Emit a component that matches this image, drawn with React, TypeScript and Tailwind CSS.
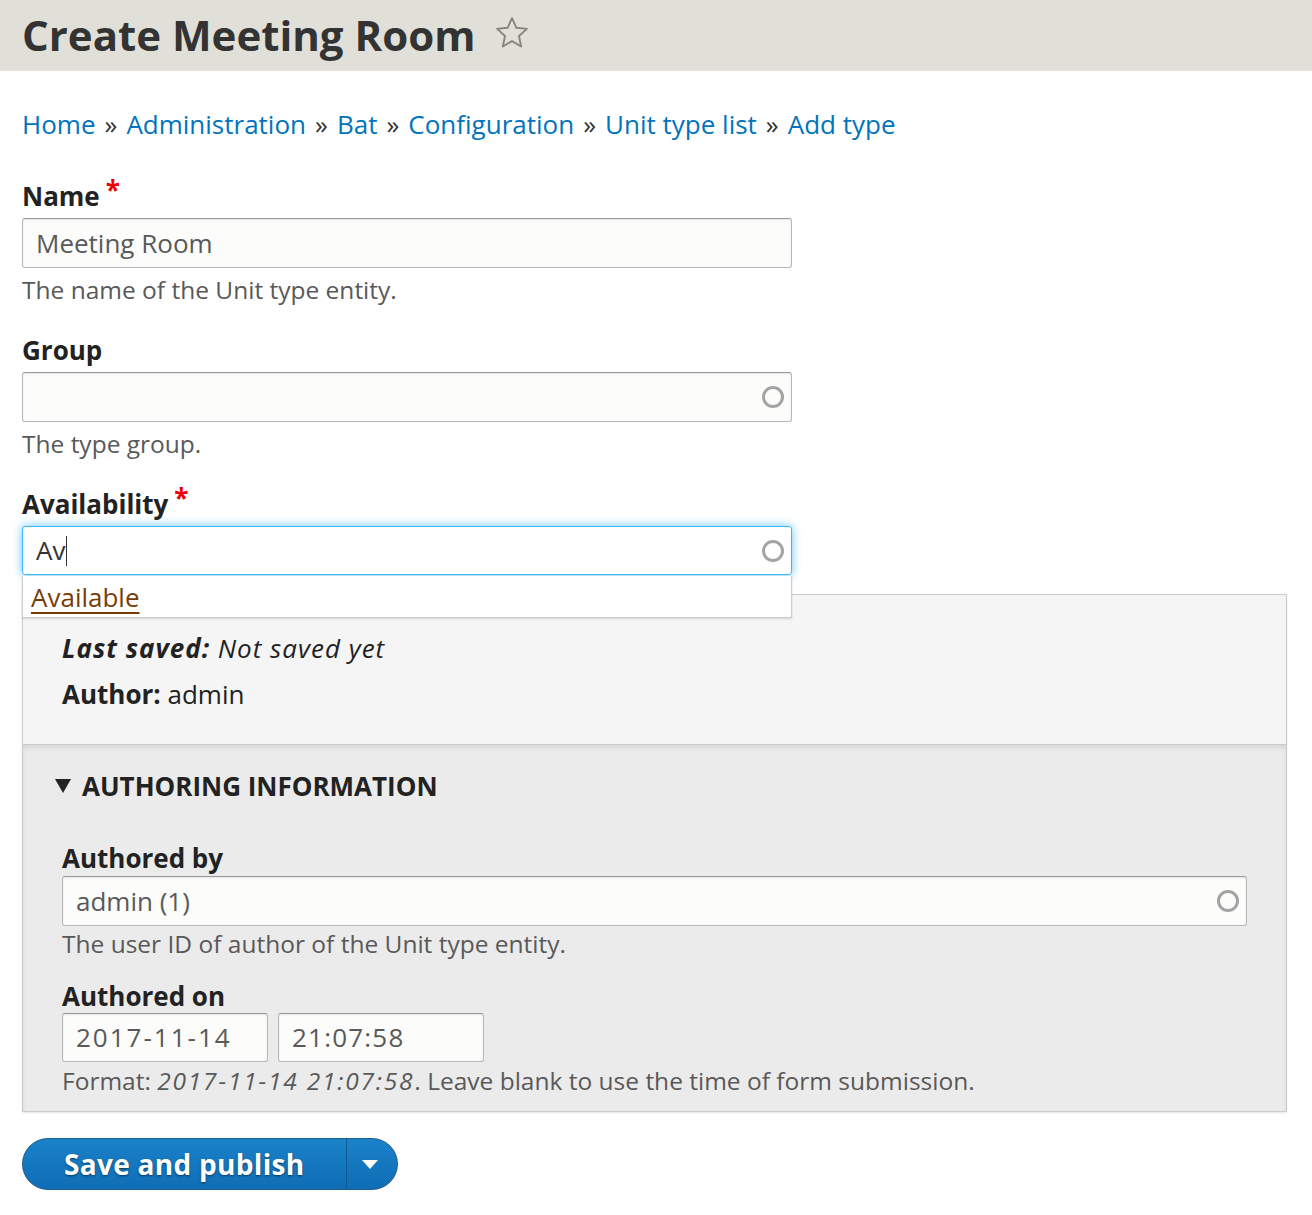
import React from 'react'

const font = { fontFamily: '"Open Sans", "Noto Sans", "DejaVu Sans", sans-serif' }

function Throbber() {
  return (
    <svg width="24" height="24" viewBox="0 0 24 24" className="shrink-0">
      <circle cx="12" cy="12" r="9.5" fill="none" stroke="#a3a3a3" strokeWidth="3" />
    </svg>
  )
}

function Label({ children, required, className = 'mb-[6px]' }: { children: React.ReactNode; required?: boolean; className?: string }) {
  return (
    <div className={`font-bold text-[26px] leading-[32px] text-[#222] ${className}`}>
      {children}
      {required && <span className="text-[#e00] ml-[6px] relative -top-[6px]">*</span>}
    </div>
  )
}

function Field({ value, throbber, className = '' }: { value: string; throbber?: boolean; className?: string }) {
  return (
    <div
      className={`h-[50px] flex items-center justify-between pl-[13px] ${throbber ? 'pr-[6px]' : 'pr-[13px]'} bg-[#fcfcfa] border border-[#b8b8b8] border-t-[#999] rounded-[3px] shadow-[inset_0_1px_2px_rgba(0,0,0,0.1)] text-[26px] text-[#595959] ${className}`}
    >
      <span>{value}</span>
      {throbber && <Throbber />}
    </div>
  )
}

function Desc({ children, className = 'mt-[7px]' }: { children: React.ReactNode; className?: string }) {
  return <div className={`text-[24.5px] leading-[30px] text-[#595959] ${className}`}>{children}</div>
}

export default function App() {
  const crumbs = ['Home', 'Administration', 'Bat', 'Configuration', 'Unit type list', 'Add type']
  return (
    <div style={font} className="w-[1312px] min-h-[1215px] bg-white text-[#333]">
      {/* Page title */}
      <div className="h-[71px] bg-[#e0e0d8] flex items-center px-[22px] gap-[18px]">
        <h1 className="text-[42px] font-bold text-[#333] leading-none -mt-[2px]">Create Meeting Room</h1>
        <svg width="38" height="38" viewBox="0 0 24 24" className="-mt-[6px]">
          <path
            d="M12 2.6l2.8 6.1 6.6.7-5 4.5 1.4 6.6L12 17.1l-5.8 3.4 1.4-6.6-5-4.5 6.6-.7z"
            fill="none"
            stroke="#868679"
            strokeWidth="1.2"
            strokeLinejoin="round"
          />
        </svg>
      </div>

      <div className="px-[22px]">
        {/* Breadcrumb */}
        <nav className="mt-[36px] text-[26px] leading-[34px] text-[#0074bd]">
          {crumbs.map((c, i) => (
            <span key={c}>
              <a href="#">{c}</a>
              {i < crumbs.length - 1 && <span className="text-[#333] mx-[9px]">»</span>}
            </span>
          ))}
        </nav>

        <form className="mt-[39px]">
          <div className="w-[770px]">
            <Label required>Name</Label>
            <Field value="Meeting Room" />
            <Desc>The name of the Unit type entity.</Desc>
          </div>

          <div className="w-[770px] mt-[29px]">
            <Label>Group</Label>
            <Field value="" throbber />
            <Desc>The type group.</Desc>
          </div>

          <div className="w-[770px] mt-[29px]">
            <Label required>Availability</Label>
            <div className="relative z-10">
              <div className="h-[49px] flex items-center justify-between pl-[13px] pr-[6px] bg-white border border-[#40b6ff] rounded-[3px] shadow-[0_0_10px_rgba(64,182,255,0.8)] text-[26px] text-[#333]">
                <span className="flex items-center">
                  Av<span className="inline-block w-[1px] h-[30px] bg-[#333] ml-[1px]" />
                </span>
                <Throbber />
              </div>
              <div className="absolute left-0 right-0 top-full mt-[1px] h-[42px] bg-white border border-[#ccc] border-t-0 shadow-[0_1px_2px_rgba(0,0,0,0.15)] px-[8px] flex items-center">
                <a href="#" className="text-[26px] leading-none text-[#7a3c05] underline decoration-[2px] underline-offset-[5px]">
                  Available
                </a>
              </div>
            </div>
          </div>

          {/* Meta panels */}
          <div className="mt-[19px] w-[1265px] border border-[#ccc] shadow-[0_1px_2px_rgba(0,0,0,0.1)]">
            <div className="bg-[#f5f5f5] pl-[39px] pt-[37px] pb-[34px] text-[26px] text-[#222] border-b border-[#ccc]">
              <div className="leading-[32px] italic tracking-[1px]">
                <span className="font-bold">Last saved:</span> Not saved yet
              </div>
              <div className="leading-[32px] mt-[14px]">
                <span className="font-bold">Author:</span> admin
              </div>
            </div>
            <div className="bg-[#ebebeb] shadow-[inset_0_3px_4px_rgba(0,0,0,0.08)] pt-[25px] pb-[15px]">
              <div className="pl-[32px] flex items-center gap-[11px] font-bold text-[26px] leading-[32px] text-[#222] uppercase">
                <svg width="16" height="14" viewBox="0 0 16 14">
                  <path d="M0 0h16L8 14z" fill="#222" />
                </svg>
                Authoring information
              </div>
              <div className="pl-[39px] pr-[39px] mt-[40px]">
                <Label className="mb-[2px]">Authored by</Label>
                <Field value="admin (1)" throbber />
                <Desc className="mt-[3px]">The user ID of author of the Unit type entity.</Desc>

                <div className="mt-[21px]">
                  <Label className="mb-[1px]">Authored on</Label>
                  <div className="flex gap-[10px]">
                    <Field value="2017-11-14" className="w-[206px] !h-[49px] tracking-[2px]" />
                    <Field value="21:07:58" className="w-[206px] !h-[49px] tracking-[1.2px]" />
                  </div>
                  <Desc className="mt-[4px]">
                    Format: <em className="tracking-[1.8px]">2017-11-14 21:07:58</em>. Leave blank to use the time of form submission.
                  </Desc>
                </div>
              </div>
            </div>
          </div>

          {/* Actions */}
          <div className="mt-[26px] flex">
            <div className="flex h-[52px] rounded-full overflow-hidden border border-[#1e5c90] bg-gradient-to-b from-[#1a82c9] to-[#0f6db5] text-white">
              <button
                type="button"
                className="pl-[41px] pr-[42px] text-[28px] font-bold leading-none [text-shadow:0_1px_2px_rgba(0,0,0,0.5)] tracking-[0.3px]"
              >
                Save and publish
              </button>
              <div className="w-[1px] bg-[#0d5a93]" />
              <button type="button" className="w-[50px] flex items-center justify-center pr-[4px]">
                <svg width="16" height="9" viewBox="0 0 16 9">
                  <path d="M0 0h16L8 9z" fill="#fff" />
                </svg>
              </button>
            </div>
          </div>
        </form>
      </div>
    </div>
  )
}
